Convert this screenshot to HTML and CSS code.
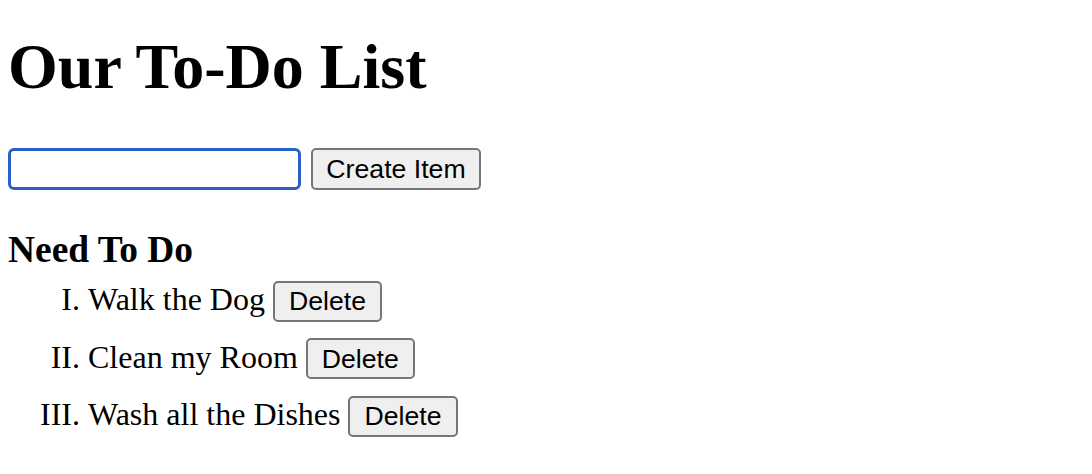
FILE: index.html
```html
<!DOCTYPE html>
<html lang="en">
<head>
<meta charset="utf-8">
<title>Our To-Do List</title>
<link rel="stylesheet" href="styles.css">
</head>
<body>
<h1 class="title">Our To-Do List</h1>
<form class="create-form">
  <input class="item-input" type="text" aria-label="New item">
  <button class="btn create-btn" type="button">Create Item</button>
</form>
<h3 class="section-title">Need To Do</h3>
<ol class="todo-list">
  <li class="todo-item">Walk the Dog <button class="btn delete-btn" type="button">Delete</button></li>
  <li class="todo-item">Clean my Room <button class="btn delete-btn" type="button">Delete</button></li>
  <li class="todo-item">Wash all the Dishes <button class="btn delete-btn" type="button">Delete</button></li>
</ol>
</body>
</html>
```

FILE: styles.css
```css
html, body {
  background: #ffffff;
}

body {
  margin: 0;
  padding: 0 0 0 8px;
  font-family: "Liberation Serif", "Times New Roman", serif;
  color: #000000;
}

.title {
  margin: 30px 0 0 0;
  font-size: 64px;
  font-weight: bold;
  line-height: 74px;
}

.create-form {
  display: flex;
  align-items: center;
  gap: 10px;
  margin: 44px 0 0 0;
  height: 42px;
}

.item-input {
  box-sizing: border-box;
  width: 293px;
  height: 42px;
  margin: 0;
  border: 3px solid #2a5fc9;
  border-radius: 6px;
  background: #ffffff;
  outline: none;
  padding: 2px 4px;
  font-family: "Liberation Sans", Arial, sans-serif;
  font-size: 26.67px;
}

.btn {
  box-sizing: border-box;
  margin: 0;
  background: #efefef;
  border: 2px solid #767676;
  border-radius: 5px;
  color: #000000;
  font-family: "Liberation Sans", Arial, sans-serif;
  font-size: 26.67px;
  padding: 0 13px;
  line-height: 30px;
}

.create-btn {
  height: 42px;
  width: 170px;
}

.section-title {
  margin: 38px 0 0 0;
  font-size: 37.44px;
  font-weight: bold;
  line-height: 43px;
}

.todo-list {
  margin: 0;
  padding: 0 0 0 80px;
  list-style-type: upper-roman;
  font-size: 32px;
}

.todo-item {
  line-height: 57.5px;
  height: 57.5px;
}

.delete-btn {
  height: 41px;
  padding: 0 14px;
}
```
